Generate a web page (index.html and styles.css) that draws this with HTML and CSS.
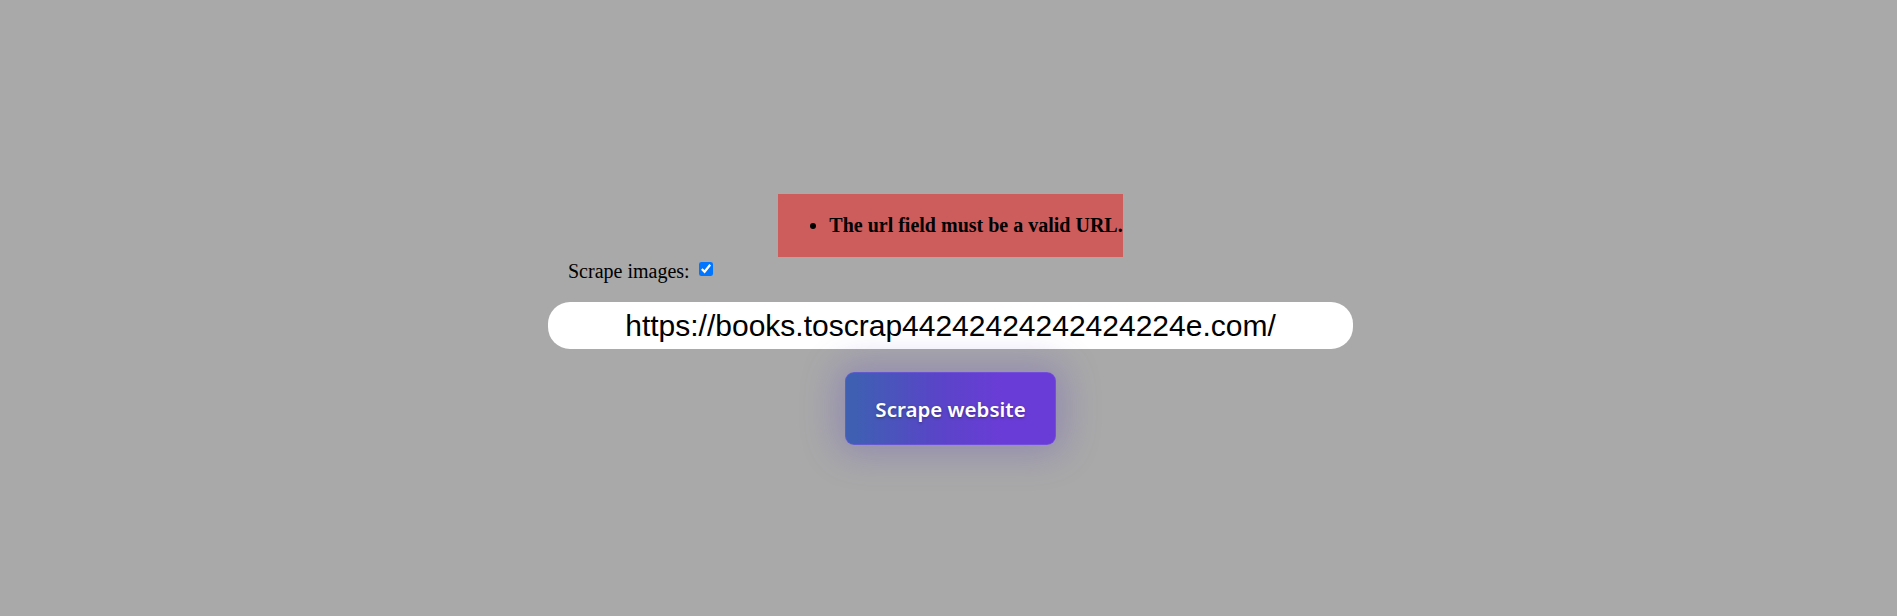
FILE: index.html
```html
<!DOCTYPE html>
<html lang="en">
<head>
<meta charset="utf-8">
<title>Scraper</title>
<link rel="stylesheet" href="styles.css">
</head>
<body>
<main class="page">
  <div class="errors">
    <ul class="error-list">
      <li>The url field must be a valid URL.</li>
    </ul>
  </div>
  <form class="form">
    <div class="opt-row">
      <label class="opt-label" for="images">Scrape images:</label><input class="opt-check" type="checkbox" id="images" checked>
    </div>
    <input class="url" type="text" value="https://books.toscrap44242424242424224e.com/">
    <button class="submit" type="button">Scrape website</button>
  </form>
</main>
</body>
</html>
```
FILE: styles.css
```css
html, body {
  margin: 0;
  padding: 0;
}
body {
  background: #a9a9a9;
  font-family: "Liberation Serif", "Times New Roman", serif;
  font-size: 20px;
  color: #000;
  min-height: 616px;
}
.page {
  display: flex;
  flex-direction: column;
  align-items: center;
  padding-top: 194px;
  padding-left: 4px;
}
.errors {
  background: #cd5c5c;
  padding: 20px 0 20px 11px;
}
.error-list {
  margin: 0;
  padding-left: 40px;
  font-weight: bold;
  line-height: 23px;
}
.form {
  display: flex;
  flex-direction: column;
  align-items: center;
  width: 805px;
}
.opt-row {
  align-self: stretch;
  padding-left: 20px;
  margin-top: 2px;
  height: 23px;
  line-height: 23px;
}
.opt-label {
  margin-right: 5px;
}
.opt-check {
  width: 14px;
  height: 14px;
  margin: 3px 3px 4px 4px;
  vertical-align: 2px;
  accent-color: #0075ff;
}
.url {
  box-sizing: border-box;
  width: 805px;
  height: 47px;
  margin-top: 20px;
  border: none;
  border-radius: 22px;
  background: #fff;
  font-family: "Liberation Sans", Arial, sans-serif;
  font-size: 30px;
  text-align: center;
  color: #000;
  padding: 0 10px;
  outline: none;
}
.submit {
  margin-top: 23px;
  height: 73px;
  padding: 0 29px;
  border: 1px solid rgba(120, 90, 220, 0.6);
  border-radius: 9px;
  background: linear-gradient(90deg, #3f5fb3 5%, #5a44c8 45%, #6a3cd7 75%, #6a3cd7 100%);
  box-shadow: 0 0 36px 8px rgba(100, 75, 190, 0.33);
  color: #fff;
  font-family: "Noto Sans", "Open Sans", sans-serif;
  font-weight: 600;
  font-size: 20.5px;
  text-shadow: 0 1px 3px rgba(0, 0, 0, 0.35);
  cursor: pointer;
}
```
